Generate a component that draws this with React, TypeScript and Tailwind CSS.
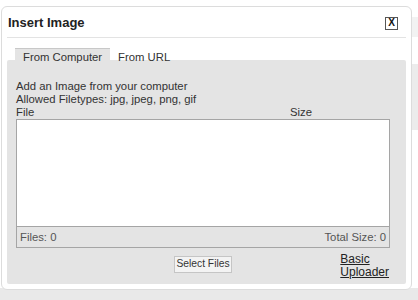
export default function App() {
  return (
    <div
      className="relative h-[300px] w-[418px] overflow-hidden bg-white text-[11.3px] text-[#333]"
      style={{ fontFamily: '"Liberation Sans", Arial, sans-serif' }}
    >
      {/* page behind the dialog */}
      <div className="absolute right-0 top-[17px] h-[20px] w-[8px] bg-[#f2f2f2]" />
      <div className="absolute right-0 top-[64px] h-[66px] w-[8px] bg-[#ececec]" />
      <div className="absolute bottom-0 left-0 h-[12px] w-full bg-[#e9e9e9]" />

      <div className="absolute left-[1px] top-[6px] flex h-[284px] w-[411px] flex-col rounded-[6px] border border-[#dcdcdc] bg-white px-[5px] pb-[5px]">
        <div className="flex h-[31px] items-center justify-between border-b border-[#e3e3e3] pl-[1px] pr-[8px] pt-[1px]">
          <span className="text-[13px] font-bold text-[#222]">Insert Image</span>
          <span className="mt-[1px] flex h-[13px] w-[13px] items-center justify-center border border-[#555] text-[10px] font-bold leading-none text-[#111]">
            X
          </span>
        </div>

        <div className="relative z-10 mt-[10px] flex pl-[8px]">
          <div className="h-[12px] border-t border-[#c8c8c8] bg-[#e4e4e4] px-[8px] pt-[2px] leading-[13px]">
            From Computer
          </div>
          <div className="h-[12px] bg-white px-[8px] pt-[3px] leading-[13px]">From URL</div>
        </div>

        <div className="flex flex-1 flex-col rounded-[2px] bg-[#e4e4e4] pl-[9px] pr-[16px] pt-[20px]">
          <div className="leading-[13px]">Add an Image from your computer</div>
          <div className="leading-[13px]">Allowed Filetypes: jpg, jpeg, png, gif</div>
          <div className="flex leading-[13px]">
            <span className="w-[274px]">File</span>
            <span>Size</span>
          </div>
          <div className="flex h-[129px] flex-col border border-[#a5a5a5] bg-white">
            <div className="flex-1" />
            <div className="flex h-[21px] items-center justify-between border-t border-[#a5a5a5] bg-[#e4e4e4] px-[3px] text-[#555]">
              <span>Files: 0</span>
              <span>Total Size: 0</span>
            </div>
          </div>
          <div className="relative mt-[5px] flex justify-center">
            <button className="mt-[3px] h-[17px] border border-[#c5c5c5] bg-[#f3f3f3] px-[1px] text-[10.3px] leading-none text-[#333]">
              Select Files
            </button>
            <a className="absolute right-[1px] top-0 text-[12px] leading-[13px] text-[#222] underline">
              Basic
              <br />
              Uploader
            </a>
          </div>
        </div>
      </div>
    </div>
  );
}
